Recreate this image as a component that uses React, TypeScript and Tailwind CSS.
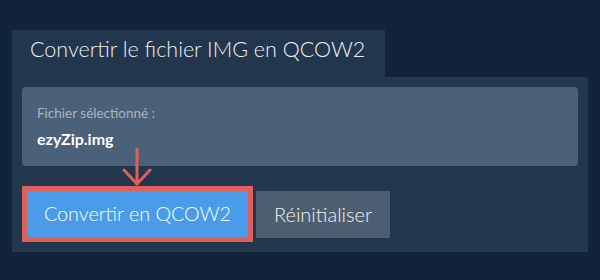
import React from 'react';

const ArrowDown: React.FC = () => (
  <svg
    className="absolute left-[100px] top-[-39px] pointer-events-none"
    width="30"
    height="40"
    viewBox="0 0 30 40"
    fill="none"
    stroke="#df605a"
    strokeWidth="3"
    strokeLinecap="round"
    strokeLinejoin="round"
  >
    <path d="M15 2 V37" />
    <path d="M2 23 L15 37 L28 23" />
  </svg>
);

export default function App() {
  return (
    <div className="w-[600px] h-[280px] bg-[#10233a] pt-[30px] px-[12px] font-['Lato','Noto_Sans',sans-serif]">
      <div className="w-[373px] h-[47px] bg-[#22364d] pl-[18px] pt-[5px]">
        <h2 className="text-[21.5px] leading-[28px] font-light text-[#eef1f4]">Convertir le fichier IMG en QCOW2</h2>
      </div>
      <div className="w-[576px] bg-[#22364d] p-[10px]">
        <div className="h-[79px] rounded-[4px] bg-[#4b6079] px-[15px] pt-[17px]">
          <p className="text-[13.5px] leading-[18px] text-[#aab6c4]">Fichier sélectionné :</p>
          <p className="mt-[7px] text-[16px] leading-[20px] font-bold text-white">ezyZip.img</p>
        </div>
        <div className="mt-[20px] flex items-center gap-[3px]">
          <div className="relative">
            <ArrowDown />
            <button className="h-[56px] border-[5px] border-[#df605a] bg-[#4a9ce8] px-[17px] text-[19.7px] font-light text-white">
              Convertir en QCOW2
            </button>
          </div>
          <button className="h-[47px] bg-[#4d5e70] px-[18px] text-[20px] font-light text-[#eef1f4]">Réinitialiser</button>
        </div>
      </div>
    </div>
  );
}
